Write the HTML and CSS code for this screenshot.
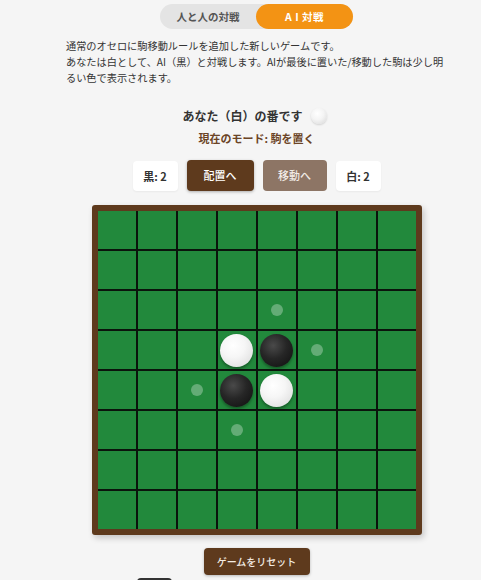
FILE: index.html
```html
<!DOCTYPE html>
<html lang="ja">
<head>
<meta charset="utf-8">
<link rel="stylesheet" href="styles.css">
</head>
<body>
<div class="app">
  <div class="toggle">
    <div class="tab">人と人の対戦</div>
    <div class="tab active">A I 対戦</div>
  </div>
  <p class="desc">通常のオセロに駒移動ルールを追加した新しいゲームです。<br>あなたは白として、AI（黒）と対戦します。AIが最後に置いた/移動した駒は少し明るい色で表示されます。</p>
  <div class="turn">あなた（白）の番です<span class="turn-disc"></span></div>
  <div class="mode">現在のモード: 駒を置く</div>
  <div class="controls">
    <div class="score">黒: 2</div>
    <div class="btn btn-on">配置へ</div>
    <div class="btn btn-off">移動へ</div>
    <div class="score">白: 2</div>
  </div>
  <div class="board" id="board"></div>
  <div class="reset">ゲームをリセット</div>
  <div class="footer"><div class="footer-block"></div></div>
</div>
<script>
  var b = document.getElementById('board');
  var pieces = {'3,3':'w','3,4':'b','4,3':'b','4,4':'w'};
  var hints = {'2,4':1,'3,5':1,'4,2':1,'5,3':1};
  for (var r = 0; r < 8; r++) {
    for (var c = 0; c < 8; c++) {
      var cell = document.createElement('div');
      cell.className = 'cell';
      var k = r + ',' + c;
      if (pieces[k]) {
        var d = document.createElement('div');
        d.className = 'disc ' + (pieces[k] === 'w' ? 'white' : 'black');
        cell.appendChild(d);
      } else if (hints[k]) {
        var h = document.createElement('div');
        h.className = 'hint';
        cell.appendChild(h);
      }
      b.appendChild(cell);
    }
  }
</script>
</body>
</html>
```

FILE: styles.css
```css
html, body {
  margin: 0;
  padding: 0;
  background: #f5f5f5;
}
body {
  font-family: "Noto Sans CJK JP", "Noto Sans", sans-serif;
  color: #333;
  padding: 4px 0 0 32px;
}
.app {
  width: 449px;
  display: flex;
  flex-direction: column;
  align-items: center;
}
.toggle {
  display: flex;
  background: #e4e4e4;
  border-radius: 13px;
  height: 25px;
}
.tab {
  width: 96px;
  height: 25px;
  line-height: 25px;
  text-align: center;
  font-size: 10.5px;
  font-weight: 700;
  color: #555;
  border-radius: 13px;
}
.tab.active {
  width: 97px;
  background: #f39314;
  color: #fff;
  letter-spacing: 0.5px;
}
.desc {
  width: 384px;
  margin: 9px 0 0 3px;
  font-size: 10.2px;
  line-height: 16px;
  color: #333;
}
.turn {
  margin-top: 21px;
  font-size: 12px;
  line-height: 18px;
  font-weight: 700;
  color: #333;
  display: flex;
  align-items: center;
  padding-right: 4px;
}
.turn-disc {
  display: inline-block;
  width: 16px;
  height: 16px;
  border-radius: 50%;
  margin-left: 8px;
  background: radial-gradient(circle at 40% 35%, #ffffff 0%, #f4f4f4 45%, #d6d6d6 100%);
  box-shadow: 0 1px 2px rgba(0,0,0,0.15);
}
.mode {
  margin-top: 5px;
  font-size: 11px;
  line-height: 16px;
  font-weight: 700;
  color: #6b4426;
}
.controls {
  margin-top: 14px;
  display: flex;
  align-items: center;
  gap: 9px;
}
.score {
  width: 45px;
  height: 30px;
  line-height: 30px;
  text-align: center;
  background: #fff;
  border-radius: 4px;
  font-size: 11px;
  font-weight: 700;
  color: #333;
  box-shadow: 0 1px 2px rgba(0,0,0,0.05);
}
.btn {
  height: 31px;
  line-height: 31px;
  text-align: center;
  border-radius: 4px;
  font-size: 11px;
  font-weight: 500;
  color: #fff;
}
.btn-on {
  width: 67px;
  background: #5e3a1d;
  box-shadow: 0 1px 3px rgba(0,0,0,0.3);
}
.btn-off {
  width: 64px;
  background: #8d7565;
  color: #f1ebe6;
}
.board {
  margin-top: 14px;
  width: 318px;
  height: 318px;
  border: 6px solid #5e3a1d;
  border-radius: 3px;
  background: #0a140c;
  display: grid;
  grid-template-columns: repeat(8, 38px);
  grid-template-rows: repeat(8, 38px);
  gap: 2px;
  box-shadow: 2px 3px 6px rgba(0,0,0,0.2);
}
.cell {
  background: #22893c;
  display: flex;
  align-items: center;
  justify-content: center;
}
.disc {
  width: 33px;
  height: 33px;
  border-radius: 50%;
  box-shadow: 0 2px 3px rgba(0,0,0,0.35);
}
.disc.white {
  background: radial-gradient(circle at 40% 35%, #ffffff 0%, #f6f6f6 40%, #d8d8d8 100%);
}
.disc.black {
  background: radial-gradient(circle at 40% 35%, #4a4a4a 0%, #262626 45%, #0e0e0e 100%);
}
.hint {
  width: 12px;
  height: 12px;
  border-radius: 50%;
  background: rgba(255,255,255,0.3);
}
.reset {
  margin-top: 13px;
  width: 106px;
  height: 27px;
  line-height: 27px;
  text-align: center;
  background: #5e3a1d;
  color: #f3ebe2;
  border-radius: 4px;
  font-size: 10px;
  font-weight: 500;
  box-shadow: 0 1px 3px rgba(0,0,0,0.25);
}
.footer {
  margin-top: 3px;
  width: 449px;
  display: flex;
  padding-left: 105px;
  box-sizing: border-box;
}
.footer-block {
  width: 35px;
  height: 14px;
  background: #333;
  border-radius: 4px;
}
```
